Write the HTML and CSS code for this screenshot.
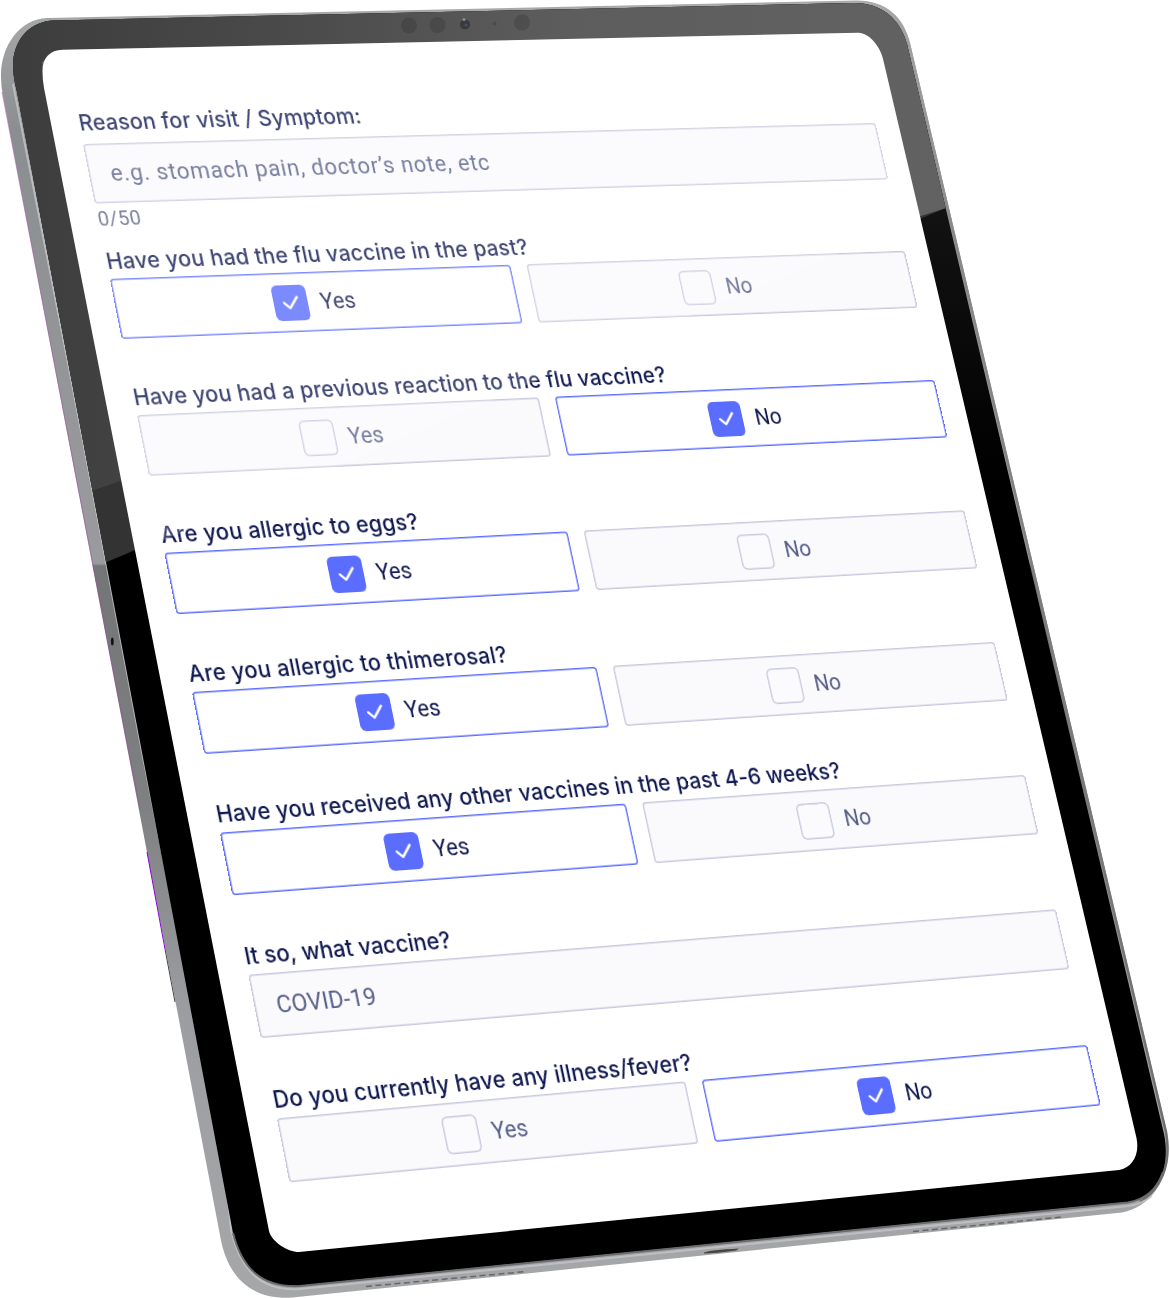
FILE: index.html
```html
<!DOCTYPE html>
<html lang="en">
<head>
<meta charset="utf-8">
<title>Patient intake form</title>
<link rel="stylesheet" href="styles.css">
</head>
<body>
<main class="tablet">
  <svg class="tablet-body" viewBox="0 0 1170 1298" aria-hidden="true">
    <defs>
      <linearGradient id="side" x1="0" y1="0" x2="0" y2="1298" gradientUnits="userSpaceOnUse">
        <stop offset="0" stop-color="#a9abac"/><stop offset=".1" stop-color="#8b8e90"/>
        <stop offset=".434" stop-color="#9a9b9e"/><stop offset=".436" stop-color="#747577"/>
        <stop offset=".62" stop-color="#7f8082"/><stop offset=".78" stop-color="#9c9da0"/><stop offset="1" stop-color="#a6a7a9"/>
      </linearGradient>
      <linearGradient id="gloss" x1="0" y1="0" x2="950" y2="0" gradientUnits="userSpaceOnUse">
        <stop offset="0" stop-color="#3c3c3c"/><stop offset=".3" stop-color="#4a4a4a"/>
        <stop offset=".6" stop-color="#5d5d5d"/><stop offset="1" stop-color="#626262"/>
      </linearGradient>
      <linearGradient id="rim" x1="900" y1="0" x2="1165" y2="1150" gradientUnits="userSpaceOnUse">
        <stop offset="0" stop-color="#a5a7a6"/><stop offset=".2" stop-color="#8a8a8a"/><stop offset="1" stop-color="#6f6f71"/>
      </linearGradient>
      <linearGradient id="dark" x1="0" y1="200" x2="0" y2="480" gradientUnits="userSpaceOnUse">
        <stop offset="0" stop-color="#131313"/><stop offset="1" stop-color="#000"/>
      </linearGradient>
      <clipPath id="front"><path d="M13 66C13 40 30 21 54 20.500L852 3C880 2 900 18 907 44L1164 1134C1171 1167 1158 1198 1128 1202L300 1285.500C262 1288 242 1269 233 1233L17 92Q13 76 13 66Z"/></clipPath>
    </defs>
    <path fill="url(#side)" d="M1 78C0 46 20 19 47 18L855 .5C884-.5 904 16 910 43L1167 1132C1174 1172 1155 1206 1122 1212.500L292 1297.500C252 1300 228 1278 220.500 1238L3 96Q1 86 1 78Z"/>
    <path fill="none" stroke="url(#rim)" stroke-width="2.500" d="M885 10Q902 20 909 44L1166 1132C1172 1165 1160 1190 1140 1202"/>
    <path class="fringe" d="M2 92L140 809"/>
    <path class="fringe fringe-strong" d="M147 852L165 949"/>
    <path class="seam" d="M165 949L175 1002"/>
    <path class="edge-light" d="M13 84L69 368L106 562L142 752L225 1168L231 1230C240 1270 262 1292 300 1289L1128 1206Q1142 1204 1152 1196"/>
    <g clip-path="url(#front)">
      <path fill="url(#dark)" d="M0 0H1170V1298H0Z"/>
      <path fill="#333" d="M0 607L946 208V0H0Z"/>
      <path fill="url(#gloss)" d="M0 521L100 488L500 350L946 208V0H0Z"/>
    </g>
    <path class="front-edge" d="M300 1286C262 1288 242 1269 233 1233M300 1286L1128 1202.500Q1154 1198 1163 1172"/>
    <g class="sensors">
      <circle cx="409" cy="25.500" r="8"/><circle cx="437.500" cy="25" r="8"/><circle cx="522" cy="22.500" r="8"/>
      <circle cx="494.500" cy="23.500" r="2"/><circle class="lens" cx="465" cy="24.500" r="5"/>
      <circle class="lens-dot" cx="466" cy="25" r="1.500"/><circle class="lens-glint" cx="464" cy="19.500" r="1.600"/>
    </g>
    <ellipse class="mic" cx="112.300" cy="641.500" rx="1.400" ry="4"/>
    <path class="speaker" d="M366 1286.500L526 1271.500M913 1231.500L1062 1217"/>
    <path class="port" d="M704 1252.500Q710 1250 739 1248.500L736 1250.500Q715 1253.500 704 1253.500Z"/>
    <path fill="#fff" d="M42.500 72C42 59 49 50 63 49.800L858 32.800C869 32.500 881 47 883.500 61L1136.500 1138C1140 1155 1132 1168 1119 1170L299 1252C290 1252.500 272 1243 269 1231L44 88Q42.500 79 42.500 72Z"/>
  </svg>

  <form class="form">
    <section class="field">
      <div class="label l1">Reason for visit / Symptom:</div>
      <div class="input placeholder">e.g. stomach pain, doctor’s note, etc</div>
      <div class="counter">0/50</div>
    </section>
    <section class="field">
      <div class="label l2">Have you had the flu vaccine in the past?</div>
      <div class="choices">
        <div class="choice selected"><span class="check"><svg viewBox="0 0 36 36"><path d="M11 17.800L16.500 23.300L25.500 12.300"/></svg></span><span class="answer">Yes</span></div>
        <div class="choice"><span class="check"></span><span class="answer">No</span></div>
      </div>
    </section>
    <section class="field">
      <div class="label l3">Have you had a previous reaction to the flu vaccine?</div>
      <div class="choices">
        <div class="choice"><span class="check"></span><span class="answer">Yes</span></div>
        <div class="choice selected"><span class="check"><svg viewBox="0 0 36 36"><path d="M11 17.800L16.500 23.300L25.500 12.300"/></svg></span><span class="answer">No</span></div>
      </div>
    </section>
    <section class="field">
      <div class="label l4">Are you allergic to eggs?</div>
      <div class="choices">
        <div class="choice selected"><span class="check"><svg viewBox="0 0 36 36"><path d="M11 17.800L16.500 23.300L25.500 12.300"/></svg></span><span class="answer">Yes</span></div>
        <div class="choice"><span class="check"></span><span class="answer">No</span></div>
      </div>
    </section>
    <section class="field">
      <div class="label l5">Are you allergic to thimerosal?</div>
      <div class="choices">
        <div class="choice selected"><span class="check"><svg viewBox="0 0 36 36"><path d="M11 17.800L16.500 23.300L25.500 12.300"/></svg></span><span class="answer">Yes</span></div>
        <div class="choice"><span class="check"></span><span class="answer">No</span></div>
      </div>
    </section>
    <section class="field">
      <div class="label l6">Have you received any other vaccines in the past 4-6 weeks?</div>
      <div class="choices">
        <div class="choice selected"><span class="check"><svg viewBox="0 0 36 36"><path d="M11 17.800L16.500 23.300L25.500 12.300"/></svg></span><span class="answer">Yes</span></div>
        <div class="choice"><span class="check"></span><span class="answer">No</span></div>
      </div>
    </section>
    <section class="field">
      <div class="label l7">It so, what vaccine?</div>
      <div class="input filled">COVID-19</div>
    </section>
    <section class="field">
      <div class="label l8">Do you currently have any illness/fever?</div>
      <div class="choices">
        <div class="choice"><span class="check"></span><span class="answer">Yes</span></div>
        <div class="choice selected"><span class="check"><svg viewBox="0 0 36 36"><path d="M11 17.800L16.500 23.300L25.500 12.300"/></svg></span><span class="answer">No</span></div>
      </div>
    </section>
  </form>

  <svg class="glare" viewBox="0 0 1170 1298" aria-hidden="true">
    <path d="M42 62L60 50L860 33L883 60L921 219L548 376L190 529L136 551Z"/>
  </svg>
</main>
</body>
</html>
```
FILE: styles.css
```css
* { box-sizing: border-box; }

body {
  margin: 0;
  background: #fff;
}

.tablet {
  position: relative;
  width: 1170px;
  height: 1298px;
  padding: 96px 0 0 83px;
  overflow: hidden;
}

.tablet-body,
.glare {
  position: absolute;
  left: 0;
  top: 0;
  width: 1170px;
  height: 1298px;
}

.glare { fill: #fff; fill-opacity: .2; pointer-events: none; }

.fringe { fill: none; stroke: #a545a5; stroke-width: 1; stroke-opacity: .5; }
.fringe-strong { stroke: #8a00d8; stroke-opacity: 1; }
.seam { stroke: #444; stroke-width: 1; }
.edge-light { fill: none; stroke: #c4c6c7; stroke-width: 2; stroke-opacity: .8; }
.front-edge { fill: none; stroke: #6b6b6f; stroke-width: 2; }
.sensors { fill: #000; fill-opacity: .13; }
.lens { fill: #333; fill-opacity: .8; }
.lens-dot { fill: #40588a; fill-opacity: .8; }
.lens-glint { fill: #8a8a8a; fill-opacity: 1; }
.mic { fill: #111; }
.speaker { stroke: #66676a; stroke-width: 1.5; stroke-dasharray: 6 3.5; }
.port { fill: #444; }

/* The form is laid out flat, then projected onto the tablet screen. */
.form {
  position: relative;
  width: 889px;
  height: 1120px;
  margin: 0;
  transform-origin: 0 48px;
  transform: matrix3d(.939444, -.024929, 0, .000060788, .190557, .958308, 0, -.00003691, 0, 0, 1, 0, 0, 0, 0, 1);
  color: #0f1850;
  font-family: Roboto, "Liberation Sans", sans-serif;
}

.field { height: 140px; }

.label {
  display: flex;
  align-items: flex-end;
  height: 48px;
  padding-bottom: 4.5px;
  font: 500 23px/28px Inter, "Liberation Sans", sans-serif;
  white-space: nowrap;
}

.l1 { padding-bottom: 8.5px; letter-spacing: .14px; }
.l2 { letter-spacing: .22px; }
.l3 { letter-spacing: .18px; }
.l4 { letter-spacing: .18px; }
.l5 { letter-spacing: .32px; }
.l6 { letter-spacing: .1px; }
.l7 { letter-spacing: 0; }
.l8 { letter-spacing: .18px; }

.input,
.choice {
  display: flex;
  align-items: center;
  height: 62px;
  border-radius: 4px;
  box-shadow: inset 0 0 0 1.5px #c8c8de;
  background: #fafafd;
  color: #575f88;
  font-size: 24px;
  letter-spacing: .85px;
}

.input { padding-left: 23px; }
.filled { letter-spacing: .2px; }

.counter {
  margin-top: 2px;
  color: #575f88;
  font-size: 21px;
  line-height: 28px;
  letter-spacing: .5px;
}

.choices {
  display: grid;
  grid-template-columns: 1fr 1fr;
  gap: 18px;
}

.choice { justify-content: center; gap: 14px; }

.answer {
  width: 47px;
  font-size: 23.5px;
  letter-spacing: .1px;
}

.choice.selected {
  box-shadow: inset 0 0 0 1.5px #5b6dff;
  background: #fff;
  color: #0f1850;
}

.check {
  width: 37px;
  height: 37px;
  border-radius: 6px;
  box-shadow: inset 0 0 0 1.5px #c8c8de;
  background: #fbfbfd;
}

.selected .check { box-shadow: none; background: #5b6dff; }
.check svg { display: block; }
.check path {
  fill: none;
  stroke: #fff;
  stroke-width: 2.5;
  stroke-linecap: round;
  stroke-linejoin: round;
}
```
